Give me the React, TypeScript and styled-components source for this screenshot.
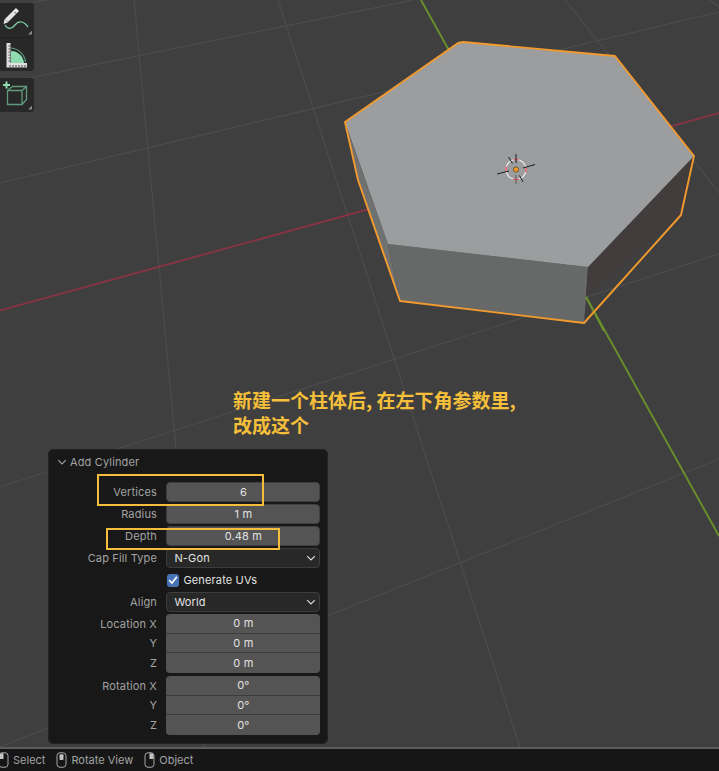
import React from "react";
import styled, { createGlobalStyle } from "styled-components";

const Global = createGlobalStyle`
  html, body { margin: 0; padding: 0; background: #3f3f3f; }
  * { box-sizing: border-box; }
`;

const Page = styled.div`
  width: 719px;
  height: 771px;
  display: flex;
  flex-direction: column;
  overflow: hidden;
  font-family: Inter, "Liberation Sans", "Noto Sans CJK SC", sans-serif;
  font-size: 11px;
  letter-spacing: 0.15px;
`;

const Viewport = styled.main`
  position: relative;
  flex: 1;
  background: #3f3f3f;
  overflow: hidden;
`;

const Scene = styled.svg`
  position: absolute;
  inset: 0;
  display: block;
`;

const ToolColumn = styled.div`
  position: absolute;
  left: 0;
  top: 3px;
  width: 34px;
  display: flex;
  flex-direction: column;
  gap: 7px;
`;

const ToolGroup = styled.div`
  display: flex;
  flex-direction: column;
  gap: 1px;
  background: #1e1e1e;
  border-radius: 0 4px 4px 0;
  overflow: hidden;
`;

const ToolButton = styled.div<{ $corner?: boolean }>`
  position: relative;
  width: 34px;
  height: 33.5px;
  background: #282828;
  svg { display: block; }
  &::after {
    content: "";
    display: ${(p) => (p.$corner ? "block" : "none")};
    position: absolute;
    right: 2px;
    bottom: 2px;
    width: 4px;
    height: 4px;
    background: #8a8a8a;
    clip-path: polygon(100% 0, 100% 100%, 0 100%);
  }
`;

const Caption = styled.div`
  position: absolute;
  left: 233px;
  top: 387px;
  width: 300px;
  color: #f5bf3a;
  font-family: "Noto Sans CJK SC", sans-serif;
  font-size: 19px;
  font-weight: 700;
  line-height: 25px;
  letter-spacing: 0;
`;

const Panel = styled.section`
  position: absolute;
  left: 48px;
  top: 449px;
  width: 280px;
  height: 295px;
  background: #181818;
  border: 1px solid #222;
  border-radius: 5px;
  display: flex;
  flex-direction: column;
  padding: 0 7px 0 0;
  margin: 0;
`;

const PanelHeader = styled.header`
  height: 24px;
  margin-bottom: 8px;
  display: flex;
  align-items: center;
  gap: 3px;
  padding-left: 8px;
  color: #a3a3a3;
  font-size: 11px;
  svg { display: block; }
`;

const Props = styled.div`
  display: flex;
  flex-direction: column;
  gap: 2px;
`;

const Row = styled.div`
  display: grid;
  grid-template-columns: 108px 154px;
  column-gap: 9.4px;
  align-items: center;
  height: 20px;
`;

const Label = styled.div`
  text-align: right;
  color: #a3a3a3;
  white-space: nowrap;
`;

const NumField = styled.div`
  height: 20px;
  grid-column: 2;
  background: #545454;
  border: 1px solid #3f3f3f;
  border-radius: 4px;
  color: #e2e2e2;
  display: flex;
  align-items: center;
  justify-content: center;
`;

const Select = styled.div`
  height: 20px;
  grid-column: 2;
  background: #282828;
  border: 1px solid #3d3d3d;
  border-radius: 4px;
  color: #e2e2e2;
  display: flex;
  align-items: center;
  justify-content: space-between;
  padding: 0 3px 0 7px;
  svg { display: block; }
`;

const CheckCell = styled.div`
  grid-column: 2;
  display: flex;
  align-items: center;
  gap: 4px;
  padding-left: 1px;
  color: #e2e2e2;
`;

const CheckBox = styled.span`
  width: 12px;
  height: 13px;
  background: #4772b3;
  border-radius: 3px;
  display: flex;
  align-items: center;
  justify-content: center;
  svg { display: block; }
`;

const VectorGroup = styled.div`
  display: flex;
  flex-direction: column;
  & + & { margin-top: 1px; }
`;

const VectorRow = styled.div`
  display: grid;
  grid-template-columns: 108px 154px;
  column-gap: 9.4px;
  align-items: center;
  height: 19.66px;
`;

const VectorCell = styled.div<{ $pos: "first" | "mid" | "last" }>`
  grid-column: 2;
  height: 100%;
  background: #545454;
  color: #e2e2e2;
  display: flex;
  align-items: center;
  justify-content: center;
  border-bottom: ${(p) => (p.$pos === "last" ? "0" : "1px solid #3c3c3c")};
  border-radius: ${(p) =>
    p.$pos === "first" ? "4px 4px 0 0" : p.$pos === "last" ? "0 0 4px 4px" : "0"};
`;

const Callout = styled.div<{ $l: number; $t: number; $w: number; $h: number }>`
  position: absolute;
  left: ${(p) => p.$l}px;
  top: ${(p) => p.$t}px;
  width: ${(p) => p.$w}px;
  height: ${(p) => p.$h}px;
  border: 2px solid #f5bd3c;
`;

const StatusBar = styled.footer`
  height: 24px;
  flex: none;
  background: #161616;
  border-top: 2px solid #5c5c5c;
  display: flex;
  align-items: center;
  gap: 11px;
  padding-left: 0;
  margin-left: -2px;
  color: #a3a3a3;
  font-size: 11px;
  letter-spacing: 0;
`;

const StatusItem = styled.div`
  display: flex;
  align-items: center;
  gap: 4px;
  svg { display: block; }
`;

const Mouse = ({ part }: { part: "left" | "middle" | "right" }) => (
  <svg width="11" height="16" viewBox="0 0 11 16" fill="none">
    <rect x="1" y="0.75" width="9" height="14.5" rx="3" stroke="#a8a8a8" strokeWidth="1" />
    {part === "left" && <path d="M1.5 7V3.5A2.5 2.5 0 0 1 4 1.2H5.5V7Z" fill="#c4c4c4" />}
    {part === "middle" && <rect x="3.5" y="2.2" width="4" height="5.8" rx="1" fill="#c4c4c4" />}
    {part === "right" && <path d="M5.5 1.2H7A2.5 2.5 0 0 1 9.5 3.5V7H5.5Z" fill="#c4c4c4" />}
  </svg>
);

const Chevron = ({ color, size = 10 }: { color: string; size?: number }) => (
  <svg width={size} height={size} viewBox="0 0 10 10" fill="none">
    <path d="M1.2 3.2 5 7 8.8 3.2" stroke={color} strokeWidth="1.1" />
  </svg>
);

const gridLines: [number, number, number, number][] = [
  [134, 0, 204, 747],
  [278, 0, 520, 747],
  [565, 0, 725, 200],
  [710, 0, 719, 7],
  [33, 2, 47, 0],
  [0, 84, 413, 0],
  [0, 183, 719, 12],
  [0, 487, 719, 254],
  [0, 747, 719, 459],
];

const Cursor = () => (
  <g fill="none">
    <circle cx="516" cy="169.5" r="10" stroke="#ececec" strokeWidth="1.2" />
    <circle cx="516" cy="169.5" r="10" stroke="#e8444f" strokeWidth="1.2" strokeDasharray="5.5 10.2" strokeDashoffset="2.7" />
    <g stroke="#1d1d1d" strokeWidth="1">
      <path d="M497 174 509 171M523 168 535 164.5" />
      <path d="M516 154V163" />
      <path d="M508.5 157 512.5 163.5M519.5 175.5 523 182" />
    </g>
    <path d="M516 175V184" stroke="#5c5c5c" strokeWidth="1" />
    <circle cx="516" cy="169.5" r="2.6" fill="#f29a28" stroke="#3a2a10" strokeWidth="0.6" />
  </g>
);

const Vector = ({ name, values }: { name: string; values: string[] }) => (
  <VectorGroup>
    {values.map((v, i) => (
      <VectorRow key={i}>
        <Label>{i === 0 ? `${name} X` : i === 1 ? "Y" : "Z"}</Label>
        <VectorCell $pos={i === 0 ? "first" : i === 1 ? "mid" : "last"}>{v}</VectorCell>
      </VectorRow>
    ))}
  </VectorGroup>
);

export default function App() {
  return (
    <Page>
      <Global />
      <Viewport>
        <Scene width="719" height="747" viewBox="0 0 719 747">
          <g stroke="#4d4d4d" strokeWidth="1.1">
            {gridLines.map(([a, b, c, d], i) => (
              <line key={i} x1={a} y1={b} x2={c} y2={d} />
            ))}
          </g>
          <line x1="0" y1="310.5" x2="719" y2="113" stroke="#8a3344" strokeWidth="1.8" />
          <line x1="421" y1="0" x2="719" y2="536" stroke="#6a8f2b" strokeWidth="1.9" />

          <polygon points="345,123 388,244 400,301 358,180" fill="#707272" />
          <polygon points="388,244 588,267 586,297 584,323 400,301" fill="#676968" />
          <polygon points="588,267 694,156 681,215 586,297" fill="#423d3c" />
          <polygon
            points="345,122 458,43 463,42 615,56 694,156 588,267 388,244"
            fill="#9c9d9f"
          />
          <line x1="586" y1="297" x2="604" y2="331" stroke="#6a8f2b" strokeWidth="1.9" />
          <polygon
            points="345,122 458,43 463,42 615,56 694,156 681,215 584,323 400,301 358,180"
            fill="none"
            stroke="#f29a2e"
            strokeWidth="1.9"
            strokeLinejoin="round"
          />
          <Cursor />
        </Scene>

        <ToolColumn>
          <ToolGroup>
            <ToolButton $corner>
              <svg width="34" height="33" viewBox="0 0 34 33" fill="none">
                <path d="M5 22C8 27 12 26 15 22C18 18 23 17 28 24" stroke="#7fcba3" strokeWidth="1.3" />
                <path d="M6.5 17.5 17.5 6.5" stroke="#e4e4e4" strokeWidth="4.4" />
                <path d="M4.8 15.8 8.2 19.2 3.4 21Z" fill="#e4e4e4" />
                <path d="M14.8 9.2 16.2 10.6" stroke="#282828" strokeWidth="1" />
              </svg>
            </ToolButton>
            <ToolButton>
              <svg width="34" height="34" viewBox="0 0 34 34" fill="none">
                <path d="M11 13A13 13 0 0 1 24 25H11Z" fill="#8fdcb0" />
                <path d="M11 10A16 16 0 0 1 25.5 24" stroke="#5f9a7d" strokeWidth="1.2" />
                <path d="M6.5 5H10.5V25H27V29.5H6.5Z" fill="#e0e0e0" />
                <path
                  d="M8.5 8H10.5M8.5 11H10.5M8.5 14H10.5M8.5 17H10.5M8.5 20H10.5M8.5 23H10.5M10 27V29.5M13 27V29.5M16 27V29.5M19 27V29.5M22 27V29.5M25 27V29.5"
                  stroke="#444"
                  strokeWidth="1"
                />
              </svg>
            </ToolButton>
          </ToolGroup>
          <ToolGroup>
            <ToolButton $corner>
              <svg width="34" height="33" viewBox="0 0 34 33" fill="none">
                <path d="M7.5 12.5H22V26.5H7.5Z M7.5 12.5 12.5 8.5H26.5V21.5L22 26.5M22 12.5 26.5 8.5" stroke="#5f9a7d" strokeWidth="1.3" />
                <path d="M6.5 3.5V10.5M3 7H10" stroke="#8fdcb0" strokeWidth="2" />
              </svg>
            </ToolButton>
          </ToolGroup>
        </ToolColumn>

        <Caption>
          新建一个柱体后, 在左下角参数里,
          <br />
          改成这个
        </Caption>

        <Panel>
          <PanelHeader>
            <Chevron color="#a3a3a3" />
            Add Cylinder
          </PanelHeader>
          <Props>
            <Row>
              <Label>Vertices</Label>
              <NumField>6</NumField>
            </Row>
            <Row>
              <Label>Radius</Label>
              <NumField>1 m</NumField>
            </Row>
            <Row>
              <Label>Depth</Label>
              <NumField>0.48 m</NumField>
            </Row>
            <Row>
              <Label>Cap Fill Type</Label>
              <Select>
                N-Gon
                <Chevron color="#e2e2e2" />
              </Select>
            </Row>
            <Row>
              <CheckCell>
                <CheckBox>
                  <svg width="10" height="10" viewBox="0 0 10 10" fill="none">
                    <path d="M1.2 5.2 4 8 8.8 1.8" stroke="#fff" strokeWidth="1.7" />
                  </svg>
                </CheckBox>
                Generate UVs
              </CheckCell>
            </Row>
            <Row>
              <Label>Align</Label>
              <Select>
                World
                <Chevron color="#e2e2e2" />
              </Select>
            </Row>
            <Vector name="Location" values={["0 m", "0 m", "0 m"]} />
            <Vector name="Rotation" values={["0°", "0°", "0°"]} />
          </Props>
        </Panel>

        <Callout $l={97} $t={474} $w={167} $h={32} />
        <Callout $l={106} $t={528} $w={174} $h={22} />
      </Viewport>
      <StatusBar>
        <StatusItem>
          <Mouse part="left" />
          Select
        </StatusItem>
        <StatusItem>
          <Mouse part="middle" />
          Rotate View
        </StatusItem>
        <StatusItem>
          <Mouse part="right" />
          Object
        </StatusItem>
      </StatusBar>
    </Page>
  );
}
